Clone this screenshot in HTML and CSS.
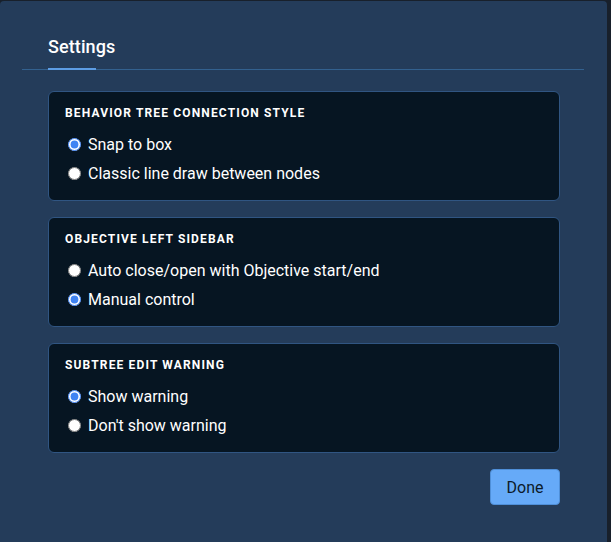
FILE: index.html
```html
<!DOCTYPE html>
<html lang="en">
<head>
    <meta charset="UTF-8">
    <meta name="viewport" content="width=device-width, initial-scale=1.0">
    <title>Settings</title>
    <link rel="stylesheet" href="styles.css">
</head>
<body>

    <div class="dialog">
        <div class="tabs">
            <div class="tab active">Settings</div>
        </div>

        <div class="content">
            <div class="card">
                <div class="card-title">Behavior tree connection style</div>
                <label class="option"><input type="radio" name="conn" checked> Snap to box</label>
                <label class="option"><input type="radio" name="conn"> Classic line draw between nodes</label>
            </div>

            <div class="card">
                <div class="card-title">Objective left sidebar</div>
                <label class="option"><input type="radio" name="sidebar"> Auto close/open with Objective start/end</label>
                <label class="option"><input type="radio" name="sidebar" checked> Manual control</label>
            </div>

            <div class="card">
                <div class="card-title">Subtree edit warning</div>
                <label class="option"><input type="radio" name="warn" checked> Show warning</label>
                <label class="option"><input type="radio" name="warn"> Don't show warning</label>
            </div>

            <div class="actions">
                <button class="done">Done</button>
            </div>
        </div>
    </div>

</body>
</html>
```

FILE: styles.css
```css
body {
    margin: 0;
    background: #18202b;
    font-family: Roboto, 'Liberation Sans', sans-serif;
    color: #fff;
    overflow: hidden;
}
.dialog {
    width: 607px;
    height: 560px;
    margin-top: 1px;
    background: #243c5a;
    border-radius: 4px 4px 0 0;
    padding-top: 35px;
    box-sizing: border-box;
}
.tabs {
    margin: 0 23px 0 22px;
    padding-left: 26px;
    border-bottom: 1px solid #33618f;
    display: flex;
}
.tab {
    position: relative;
    font-size: 18px;
    font-weight: 500;
    line-height: 22px;
    padding-bottom: 11px;
    letter-spacing: 0.1px;
}
.tab.active::after {
    content: "";
    position: absolute;
    left: 0;
    bottom: -1px;
    width: 48px;
    height: 2px;
    background: #5d9de4;
}
.content {
    padding: 21px 47px 0 48px;
}
.card {
    background: #061522;
    border: 1px solid #305582;
    border-radius: 6px;
    padding: 13px 16px 11px;
    margin-bottom: 16px;
    height: 110px;
    box-sizing: border-box;
}
.card-title {
    font-size: 12px;
    font-weight: 700;
    line-height: 16px;
    letter-spacing: 1.15px;
    text-transform: uppercase;
    margin-bottom: 9px;
}
.option {
    display: flex;
    align-items: center;
    height: 29px;
    font-size: 16px;
    cursor: pointer;
}
.option input {
    width: 13px;
    height: 13px;
    margin: 0 7px 0 3px;
    accent-color: #3f83f3;
}
.actions {
    display: flex;
    justify-content: flex-end;
    margin-top: 1px;
}
.done {
    width: 70px;
    height: 36px;
    background: #66aaf8;
    border: 1px solid #4f8fd8;
    border-radius: 4px;
    color: #0c1a2a;
    font-family: Roboto, 'Liberation Sans', sans-serif;
    font-size: 16px;
    cursor: pointer;
}
.done:hover {
    background: #5a9de9;
}
```
